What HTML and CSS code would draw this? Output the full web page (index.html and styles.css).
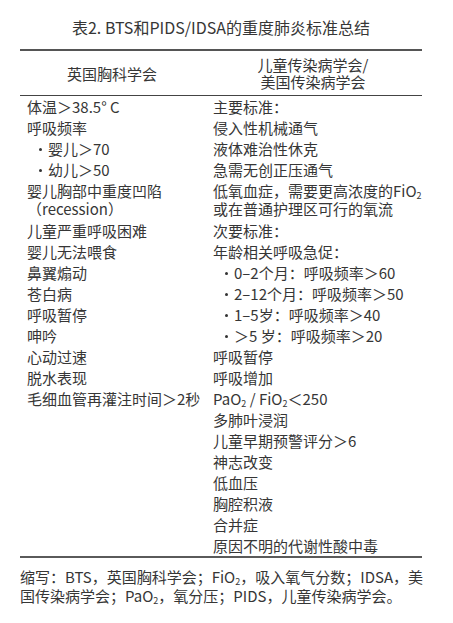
FILE: index.html
```html
<!DOCTYPE html>
<html lang="zh-CN">
<head>
<meta charset="utf-8">
<title>表2</title>
<link rel="stylesheet" href="styles.css">
</head>
<body>
<div class="page">
  <h1 class="title">表2. BTS和PIDS/IDSA的重度肺炎标准总结</h1>
  <div class="table">
    <div class="head">
      <div class="hcell">英国胸科学会</div>
      <div class="hcell">儿童传染病学会/<br>美国传染病学会</div>
    </div>
    <div class="body">
      <div class="col col-left">
        <div class="line">体温＞38.5° C</div>
        <div class="line">呼吸频率</div>
        <div class="line sub"><span class="dot"></span>婴儿＞70</div>
        <div class="line sub"><span class="dot"></span>幼儿＞50</div>
        <div class="line wrap">婴儿胸部中重度凹陷<br>（recession）</div>
        <div class="line">儿童严重呼吸困难</div>
        <div class="line">婴儿无法喂食</div>
        <div class="line">鼻翼煽动</div>
        <div class="line">苍白病</div>
        <div class="line">呼吸暂停</div>
        <div class="line">呻吟</div>
        <div class="line">心动过速</div>
        <div class="line">脱水表现</div>
        <div class="line">毛细血管再灌注时间＞2秒</div>
      </div>
      <div class="col col-right">
        <div class="line">主要标准：</div>
        <div class="line">侵入性机械通气</div>
        <div class="line">液体难治性休克</div>
        <div class="line">急需无创正压通气</div>
        <div class="line wrap">低氧血症，需要更高浓度的FiO<sub>2</sub><br>或在普通护理区可行的氧流</div>
        <div class="line">次要标准：</div>
        <div class="line">年龄相关呼吸急促：</div>
        <div class="line sub"><span class="dot"></span>0–2个月：呼吸频率＞60</div>
        <div class="line sub"><span class="dot"></span>2–12个月：呼吸频率＞50</div>
        <div class="line sub"><span class="dot"></span>1–5岁：呼吸频率＞40</div>
        <div class="line sub"><span class="dot"></span>＞5 岁：呼吸频率＞20</div>
        <div class="line">呼吸暂停</div>
        <div class="line">呼吸增加</div>
        <div class="line">PaO<sub>2</sub> / FiO<sub>2</sub>＜250</div>
        <div class="line">多肺叶浸润</div>
        <div class="line">儿童早期预警评分＞6</div>
        <div class="line">神志改变</div>
        <div class="line">低血压</div>
        <div class="line">胸腔积液</div>
        <div class="line">合并症</div>
        <div class="line">原因不明的代谢性酸中毒</div>
      </div>
    </div>
  </div>
  <p class="note">缩写：BTS，英国胸科学会；FiO<sub>2</sub>，吸入氧气分数；IDSA，美<br>国传染病学会；PaO<sub>2</sub>，氧分压；PIDS，儿童传染病学会。</p>
</div>
</body>
</html>
```

FILE: styles.css
```css
html, body {
  margin: 0;
  padding: 0;
  background: #ffffff;
}

body {
  font-family: "Noto Sans CJK SC", "Noto Sans", sans-serif;
  color: #363636;
  font-size: 15px;
}

.page {
  width: 402px;
  padding: 0 31px 0 20px;
}

.title {
  margin: 0;
  padding-top: 16px;
  height: 22px;
  line-height: 22px;
  font-size: 16px;
  font-weight: 400;
  text-align: center;
  margin-bottom: 11px;
  white-space: nowrap;
}

.table {
  border-top: 2px solid #555555;
  border-bottom: 2px solid #5a5a5a;
}

.head {
  display: grid;
  grid-template-columns: 184px 218px;
  border-bottom: 1px solid #444444;
  padding: 5px 0 5px;
}

.hcell {
  display: flex;
  align-items: center;
  justify-content: center;
  text-align: center;
  line-height: 17px;
}

.body {
  display: grid;
  grid-template-columns: 184px 218px;
}

.col {
  display: flex;
  flex-direction: column;
}

.col-left {
  padding-left: 7px;
}

.col-right {
  padding-left: 9px;
}

.line {
  line-height: 21px;
  height: 21px;
  white-space: nowrap;
}

.line.wrap {
  height: auto;
  line-height: 18px;
  padding: 2px 0;
}

.line.sub {
  padding-left: 12px;
}

.dot {
  display: inline-block;
  width: 3px;
  height: 3px;
  border-radius: 50%;
  background: #333333;
  vertical-align: middle;
  margin-right: 6px;
  position: relative;
  top: -1px;
}

sub {
  font-size: 9px;
  line-height: 0;
  vertical-align: -2px;
}

.note {
  margin: 9px 0 0;
  line-height: 19px;
  white-space: nowrap;
}
```
